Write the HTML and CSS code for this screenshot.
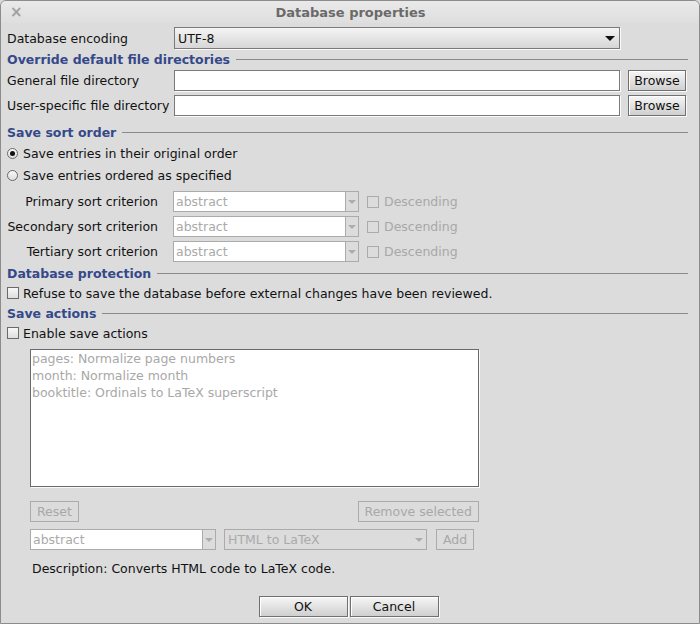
FILE: index.html
```html
<!DOCTYPE html>
<html>
<head>
<meta charset="utf-8">
<link rel="stylesheet" href="styles.css">
</head>
<body>
<div class="window">
  <div class="titlebar">
    <span class="close">×</span>
    <span class="title">Database properties</span>
  </div>
  <div class="content">
    <div class="row enc-row">
      <span class="lbl">Database encoding</span>
      <div class="combo combo-enc"><span class="combo-text">UTF-8</span><span class="arrow"></span></div>
    </div>

    <div class="section"><span class="section-title">Override default file directories</span><span class="section-line"></span></div>
    <div class="row field-row first">
      <span class="lbl">General file directory</span>
      <div class="textfield"></div>
      <button class="btn browse">Browse</button>
    </div>
    <div class="row field-row">
      <span class="lbl">User-specific file directory</span>
      <div class="textfield"></div>
      <button class="btn browse">Browse</button>
    </div>

    <div class="section sort-section"><span class="section-title">Save sort order</span><span class="section-line"></span></div>
    <div class="row radio-row"><span class="radio checked"></span><span>Save entries in their original order</span></div>
    <div class="row radio-row"><span class="radio"></span><span>Save entries ordered as specified</span></div>

    <div class="row crit-row first-crit">
      <span class="crit-lbl">Primary sort criterion</span>
      <div class="dcombo crit-combo"><span class="dcombo-text">abstract</span><span class="dcombo-btn"><span class="darrow"></span></span></div>
      <span class="check disabled"></span><span class="disabled-text">Descending</span>
    </div>
    <div class="row crit-row">
      <span class="crit-lbl">Secondary sort criterion</span>
      <div class="dcombo crit-combo"><span class="dcombo-text">abstract</span><span class="dcombo-btn"><span class="darrow"></span></span></div>
      <span class="check disabled"></span><span class="disabled-text">Descending</span>
    </div>
    <div class="row crit-row">
      <span class="crit-lbl">Tertiary sort criterion</span>
      <div class="dcombo crit-combo"><span class="dcombo-text">abstract</span><span class="dcombo-btn"><span class="darrow"></span></span></div>
      <span class="check disabled"></span><span class="disabled-text">Descending</span>
    </div>

    <div class="section prot-section"><span class="section-title">Database protection</span><span class="section-line"></span></div>
    <div class="row check-row"><span class="check"></span><span>Refuse to save the database before external changes have been reviewed.</span></div>

    <div class="section"><span class="section-title">Save actions</span><span class="section-line"></span></div>
    <div class="row check-row"><span class="check"></span><span>Enable save actions</span></div>

    <div class="actions">
      <div class="list">
        <div class="list-item">pages: Normalize page numbers</div>
        <div class="list-item">month: Normalize month</div>
        <div class="list-item">booktitle: Ordinals to LaTeX superscript</div>
      </div>
      <div class="list-buttons">
        <button class="dbtn">Reset</button>
        <button class="dbtn">Remove selected</button>
      </div>
      <div class="add-row">
        <div class="dcombo field-combo"><span class="dcombo-text">abstract</span><span class="dcombo-btn"><span class="darrow"></span></span></div>
        <div class="gcombo"><span class="dcombo-text">HTML to LaTeX</span><span class="darrow"></span></div>
        <button class="dbtn add">Add</button>
      </div>
      <div class="description">Description: Converts HTML code to LaTeX code.</div>
    </div>

    <div class="footer">
      <button class="btn footer-btn">OK</button>
      <button class="btn footer-btn">Cancel</button>
    </div>
  </div>
</div>
</body>
</html>
```

FILE: styles.css
```css
* { box-sizing: border-box; }
html, body {
  margin: 0;
  padding: 0;
  background: #dadada;
}
body {
  font-family: "DejaVu Sans", sans-serif;
  font-size: 12.5px;
  color: #111;
}
.window {
  width: 700px;
  height: 624px;
  border: 1px solid #8c8c8c;
  border-radius: 6px 6px 0 0;
  background: #dcdcdc;
  overflow: hidden;
}
.titlebar {
  height: 22px;
  background: linear-gradient(#e9e9e9, #dedede);
  position: relative;
  display: flex;
  align-items: center;
  justify-content: center;
}
.close {
  position: absolute;
  left: 9px;
  top: 2px;
  font-size: 15px;
  font-weight: bold;
  color: #a0a0a0;
}
.title {
  font-weight: bold;
  font-size: 13px;
  color: #6a6a6a;
  margin-left: 1px;
}
.content {
  padding: 0 11px 0 6px;
}
.row {
  display: flex;
  align-items: center;
}
.lbl {
  width: 167px;
  flex: none;
}
.enc-row {
  margin-top: 4px;
  height: 22px;
}
.combo {
  width: 446px;
  height: 22px;
  border: 1px solid #7a7a7a;
  box-shadow: 1px 1px 0 #fafafa;
  background: linear-gradient(#f4f4f4, #d6d6d6);
  display: flex;
  align-items: center;
  padding-left: 3px;
  justify-content: space-between;
}
.arrow {
  width: 0;
  height: 0;
  border-left: 5px solid transparent;
  border-right: 5px solid transparent;
  border-top: 5px solid #111;
  margin-right: 4px;
  margin-top: 1px;
}
.section {
  height: 20px;
  display: flex;
  align-items: center;
}
.section-title {
  font-weight: bold;
  color: #35498a;
  font-size: 12.5px;
  white-space: nowrap;
}
.section-line {
  flex: 1;
  height: 1px;
  background: #8a8a8a;
  margin-left: 6px;
  margin-top: 1px;
}
.field-row {
  height: 21px;
  margin-top: 4px;
}
.field-row.first { margin-top: 1px; }
.textfield {
  width: 446px;
  height: 21px;
  background: #fff;
  border: 1px solid #7a7a7a;
  box-shadow: 1px 1px 0 #fafafa;
  flex: none;
}
.btn {
  font-family: "DejaVu Sans", sans-serif;
  font-size: 12.5px;
  color: #111;
  border: 1px solid #707070;
  box-shadow: 1px 1px 0 #fafafa, inset 1px 1px 0 #fff;
  background: linear-gradient(#f6f6f6, #cfcfcf);
  padding: 0;
  margin: 0;
  height: 21px;
  line-height: 19px;
}
.browse {
  width: 58px;
  margin-left: 8px;
}
.sort-section { margin-top: 6px; }
.radio-row {
  height: 22px;
}
.radio {
  width: 11px;
  height: 11px;
  border-radius: 50%;
  border: 1px solid #6a6a6a;
  background: linear-gradient(#f8f8f8, #dedede);
  margin: 0 5px 0 0;
  flex: none;
  display: flex;
  align-items: center;
  justify-content: center;
}
.radio.checked::after {
  content: "";
  width: 5px;
  height: 5px;
  border-radius: 50%;
  background: #111;
}
.crit-row {
  height: 21px;
  margin-top: 4px;
}
.crit-row.first-crit { margin-top: 5px; }
.crit-lbl {
  width: 151px;
  text-align: right;
  flex: none;
  margin-right: 15px;
}
.dcombo {
  height: 21px;
  border: 1px solid #ababab;
  display: flex;
  background: #fff;
  flex: none;
}
.crit-combo { width: 186px; }
.dcombo-text {
  flex: 1;
  color: #aaaaaa;
  padding-left: 2px;
  line-height: 19px;
}
.dcombo-btn {
  width: 13px;
  border-left: 1px solid #ababab;
  background: #dcdcdc;
  display: flex;
  align-items: center;
  justify-content: center;
}
.darrow {
  width: 0;
  height: 0;
  border-left: 4px solid transparent;
  border-right: 4px solid transparent;
  border-top: 4px solid #acacac;
  margin-top: 1px;
}
.check {
  width: 12px;
  height: 12px;
  border: 1px solid #6a6a6a;
  background: linear-gradient(#f8f8f8, #dedede);
  flex: none;
  margin: 0 4px 0 0;
}
.crit-row .check {
  margin-left: 8px;
  margin-right: 5px;
}
.check.disabled {
  border-color: #ababab;
  background: #dcdcdc;
}
.disabled-text { color: #a8a8a8; }
.prot-section { margin-top: 1px; }
.check-row { height: 20px; }
.actions {
  padding-left: 23px;
}
.list {
  margin-top: 6px;
  width: 449px;
  height: 138px;
  background: #fff;
  border: 1px solid #6a6a6a;
  box-shadow: 1px 1px 0 #fafafa;
  padding: 0 0 0 1px;
}
.list-item {
  color: #a8a8a8;
  height: 17px;
  line-height: 17px;
}
.list-buttons {
  margin-top: 14px;
  width: 449px;
  display: flex;
  justify-content: space-between;
}
.dbtn {
  font-family: "DejaVu Sans", sans-serif;
  font-size: 12.5px;
  color: #a8a8a8;
  background: #dcdcdc;
  border: 1px solid #ababab;
  height: 21px;
  padding: 0 6px;
  margin: 0;
  line-height: 19px;
}
.add-row {
  margin-top: 7px;
  display: flex;
  height: 21px;
}
.field-combo { width: 186px; }
.gcombo {
  width: 203px;
  height: 21px;
  margin-left: 8px;
  border: 1px solid #ababab;
  background: #dcdcdc;
  display: flex;
  align-items: center;
  padding-right: 3px;
}
.gcombo .dcombo-text { padding-left: 3px; }
.add {
  margin-left: 9px;
  padding: 0 6px;
}
.description {
  margin-top: 9px;
  height: 20px;
  line-height: 20px;
  padding-left: 2px;
}
.footer {
  margin-top: 17px;
  display: flex;
  justify-content: center;
  gap: 2px;
  padding-left: 2px;
}
.footer-btn {
  width: 89px;
}
```
